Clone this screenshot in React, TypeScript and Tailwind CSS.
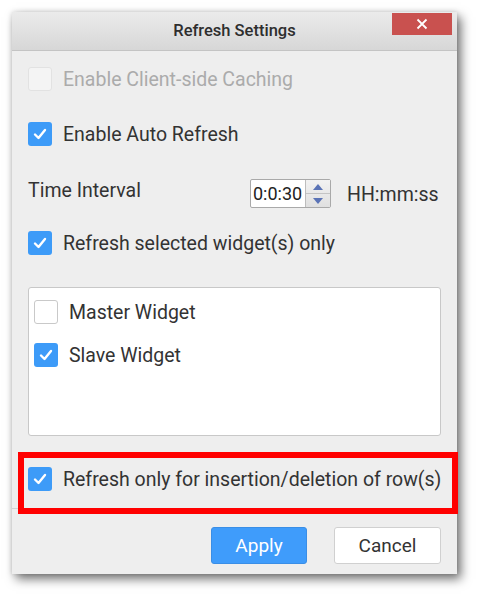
import React from "react";

const font = { fontFamily: "Roboto, 'Noto Sans', sans-serif" };

function Check() {
  return (
    <svg width="16" height="16" viewBox="0 0 16 16" fill="none">
      <path d="M3 8.5 L6.5 12 L13 4" stroke="white" strokeWidth="2.4" strokeLinecap="round" strokeLinejoin="round" />
    </svg>
  );
}

function Box({ state }: { state: "checked" | "empty" | "disabled" }) {
  if (state === "checked")
    return (
      <div className="w-[24px] h-[24px] rounded-[3px] bg-[#3d9bf8] flex items-center justify-center shrink-0">
        <Check />
      </div>
    );
  if (state === "disabled")
    return <div className="w-[24px] h-[24px] rounded-[3px] bg-[#f4f4f4] border border-[#e2e2e2] shrink-0" />;
  return <div className="w-[24px] h-[24px] rounded-[3px] bg-white border border-[#c9c9c9] shrink-0" />;
}

function Row({ state, label, className = "" }: { state: "checked" | "empty" | "disabled"; label: string; className?: string }) {
  return (
    <div className={`flex items-center h-[24px] gap-[11px] ${className}`}>
      <Box state={state} />
      <span className={`text-[19.5px] leading-none whitespace-nowrap pt-[2px] ${state === "disabled" ? "text-[#ababab]" : "text-[#333333]"}`}>{label}</span>
    </div>
  );
}

export default function App() {
  return (
    <div className="w-[478px] h-[595px] bg-white pl-[12px] pt-[12px]" style={font}>
      <div className="relative w-[445px] h-[562px] bg-[#eeeeee] flex flex-col shadow-[4px_5px_10px_rgba(0,0,0,0.55),0_0_5px_rgba(0,0,0,0.15)]">
        {/* Title bar */}
        <div className="relative h-[39px] shrink-0 bg-gradient-to-b from-[#ebebeb] to-[#d7d7d7] border-b border-[#c4c4c4] flex items-center justify-center">
          <span className="text-[16.5px] font-medium text-[#2e2e2e] pt-[1px]">Refresh Settings</span>
          <div className="absolute right-[5px] top-[1px] w-[60px] h-[22px] bg-[#c9514f] flex items-center justify-center">
            <svg width="12" height="12" viewBox="0 0 12 12">
              <path d="M1.5 1.5 L10.5 10.5 M10.5 1.5 L1.5 10.5" stroke="white" strokeWidth="1.8" />
            </svg>
          </div>
        </div>

        {/* Body */}
        <div className="px-[16px] border-b border-[#d2d2d2] h-[458px] shrink-0 flex flex-col">
          <Row state="disabled" label="Enable Client-side Caching" className="mt-[16px]" />
          <Row state="checked" label="Enable Auto Refresh" className="mt-[31px]" />
          <div className="mt-[33px] h-[29px] flex items-center">
            <span className="text-[19.5px] text-[#333333] leading-none -mt-[5px] w-[222px]">Time Interval</span>
            <div className="flex h-[29px] border border-[#a9a9a9] rounded-[2px] bg-white">
              <div className="w-[54px] flex items-center pl-[2px] pt-[1px] text-[18px] text-[#222222] leading-none">0:0:30</div>
              <div className="w-[25px] flex flex-col border-l border-[#bdbdbd] bg-gradient-to-b from-[#f2f2f2] to-[#e0e0e0]">
                <div className="flex-1 flex items-center justify-center border-b border-[#c4c4c4]">
                  <svg width="10" height="6" viewBox="0 0 10 6"><path d="M0 6 L5 0 L10 6 Z" fill="#5a73b6" /></svg>
                </div>
                <div className="flex-1 flex items-center justify-center">
                  <svg width="10" height="6" viewBox="0 0 10 6"><path d="M0 0 L5 6 L10 0 Z" fill="#5a73b6" /></svg>
                </div>
              </div>
            </div>
            <span className="ml-[16px] text-[19.5px] text-[#333333] leading-none pt-[2px]">HH:mm:ss</span>
          </div>
          <Row state="checked" label="Refresh selected widget(s) only" className="mt-[23px]" />
          <div className="mt-[32px] w-[413px] h-[149px] bg-white border border-[#c8c8c8] rounded-[3px] px-[5px] pt-[12px] flex flex-col">
            <Row state="empty" label="Master Widget" />
            <Row state="checked" label="Slave Widget" className="mt-[19px]" />
          </div>
          <Row state="checked" label="Refresh only for insertion/deletion of row(s)" className="mt-[31px]" />
        </div>

        {/* Footer */}
        <div className="flex justify-end gap-[27px] pr-[16px] pt-[18px]">
          <button className="w-[96px] h-[37px] rounded-[3px] bg-[#3f9cfb] border border-[#3a8ee6] text-white text-[19px] pt-[2px]">Apply</button>
          <button className="w-[107px] h-[37px] rounded-[3px] bg-white border border-[#d0d0d0] text-[#333333] text-[19px] pt-[2px]">Cancel</button>
        </div>

        {/* Highlight annotation */}
        <div className="absolute left-[6px] top-[440px] w-[440px] h-[62px] border-[6px] border-[#ff0000] pointer-events-none" />
      </div>
    </div>
  );
}
